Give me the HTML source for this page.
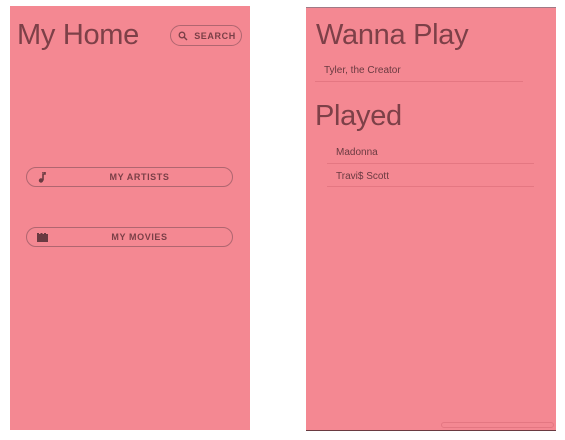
<!DOCTYPE html>
<html><head><meta charset="utf-8"><style>
body{margin:0;width:565px;height:440px;background:#fff;position:relative;overflow:hidden;font-family:"Liberation Sans",sans-serif;color:#6a3a41}
.p{position:absolute;background:#f48892}
.t{position:absolute;font-weight:normal;font-size:29px;color:#7d4048;white-space:nowrap;line-height:1;letter-spacing:-0.3px}
.btn{position:absolute;border:1px solid #b06670;border-radius:12px;box-sizing:border-box;font-size:9px;font-weight:bold;letter-spacing:0.6px;color:#7a3f47;display:flex;align-items:center;justify-content:center}
.it{position:absolute;font-size:10px;color:#6a3a41}
.ln{position:absolute;height:1px;background:#e47782}
</style></head><body>
<div class="p" style="left:10px;top:6px;width:240px;height:424px"></div>
<div class="t" style="left:17px;top:21px">My Home</div>
<div class="btn" style="left:170px;top:25px;width:72px;height:21px;padding-left:2px"><svg width="10" height="10" viewBox="0 0 10 10" style="margin-right:6px"><circle cx="4" cy="4" r="2.8" fill="none" stroke="#7a3f47" stroke-width="1.3"/><path d="M6 6L9 9" stroke="#7a3f47" stroke-width="1.4"/></svg>SEARCH</div>
<div class="btn" style="left:26px;top:167px;width:207px;height:20px;padding-left:20px">MY ARTISTS
<svg width="8" height="11" viewBox="0 0 8 11" style="position:absolute;left:11px;top:4px"><path d="M4 0h3v2H5v6.5" stroke="#6a3a41" stroke-width="1.6" fill="none"/><circle cx="3" cy="8.5" r="2.2" fill="#6a3a41"/></svg></div>
<div class="btn" style="left:26px;top:227px;width:207px;height:20px;padding-left:20px">MY MOVIES
<svg width="11" height="9" viewBox="0 0 11 9" style="position:absolute;left:10px;top:5px"><path d="M0 0h2v1h1.5V0h2v1H7V0h2v1h2v8H0z" fill="#6a3a41"/></svg></div>
<div class="p" style="left:306px;top:7px;width:250px;height:422px;border-top:1px solid #a07a86;border-bottom:1px solid #6a3a41"></div>
<div class="t" style="left:316px;top:21px">Wanna Play</div>
<div class="it" style="left:324px;top:65px">Tyler, the Creator</div>
<div class="ln" style="left:315px;top:81px;width:208px"></div>
<div class="t" style="left:315px;top:102px">Played</div>
<div class="it" style="left:336px;top:147px">Madonna</div>
<div class="ln" style="left:327px;top:163px;width:207px"></div>
<div class="it" style="left:336px;top:171px">Travi$ Scott</div>
<div class="ln" style="left:327px;top:186px;width:207px"></div>
<div style="position:absolute;left:441px;top:422px;width:113px;height:6px;border:1px solid #e47782;border-radius:4px;box-sizing:border-box"></div>
</body></html>
